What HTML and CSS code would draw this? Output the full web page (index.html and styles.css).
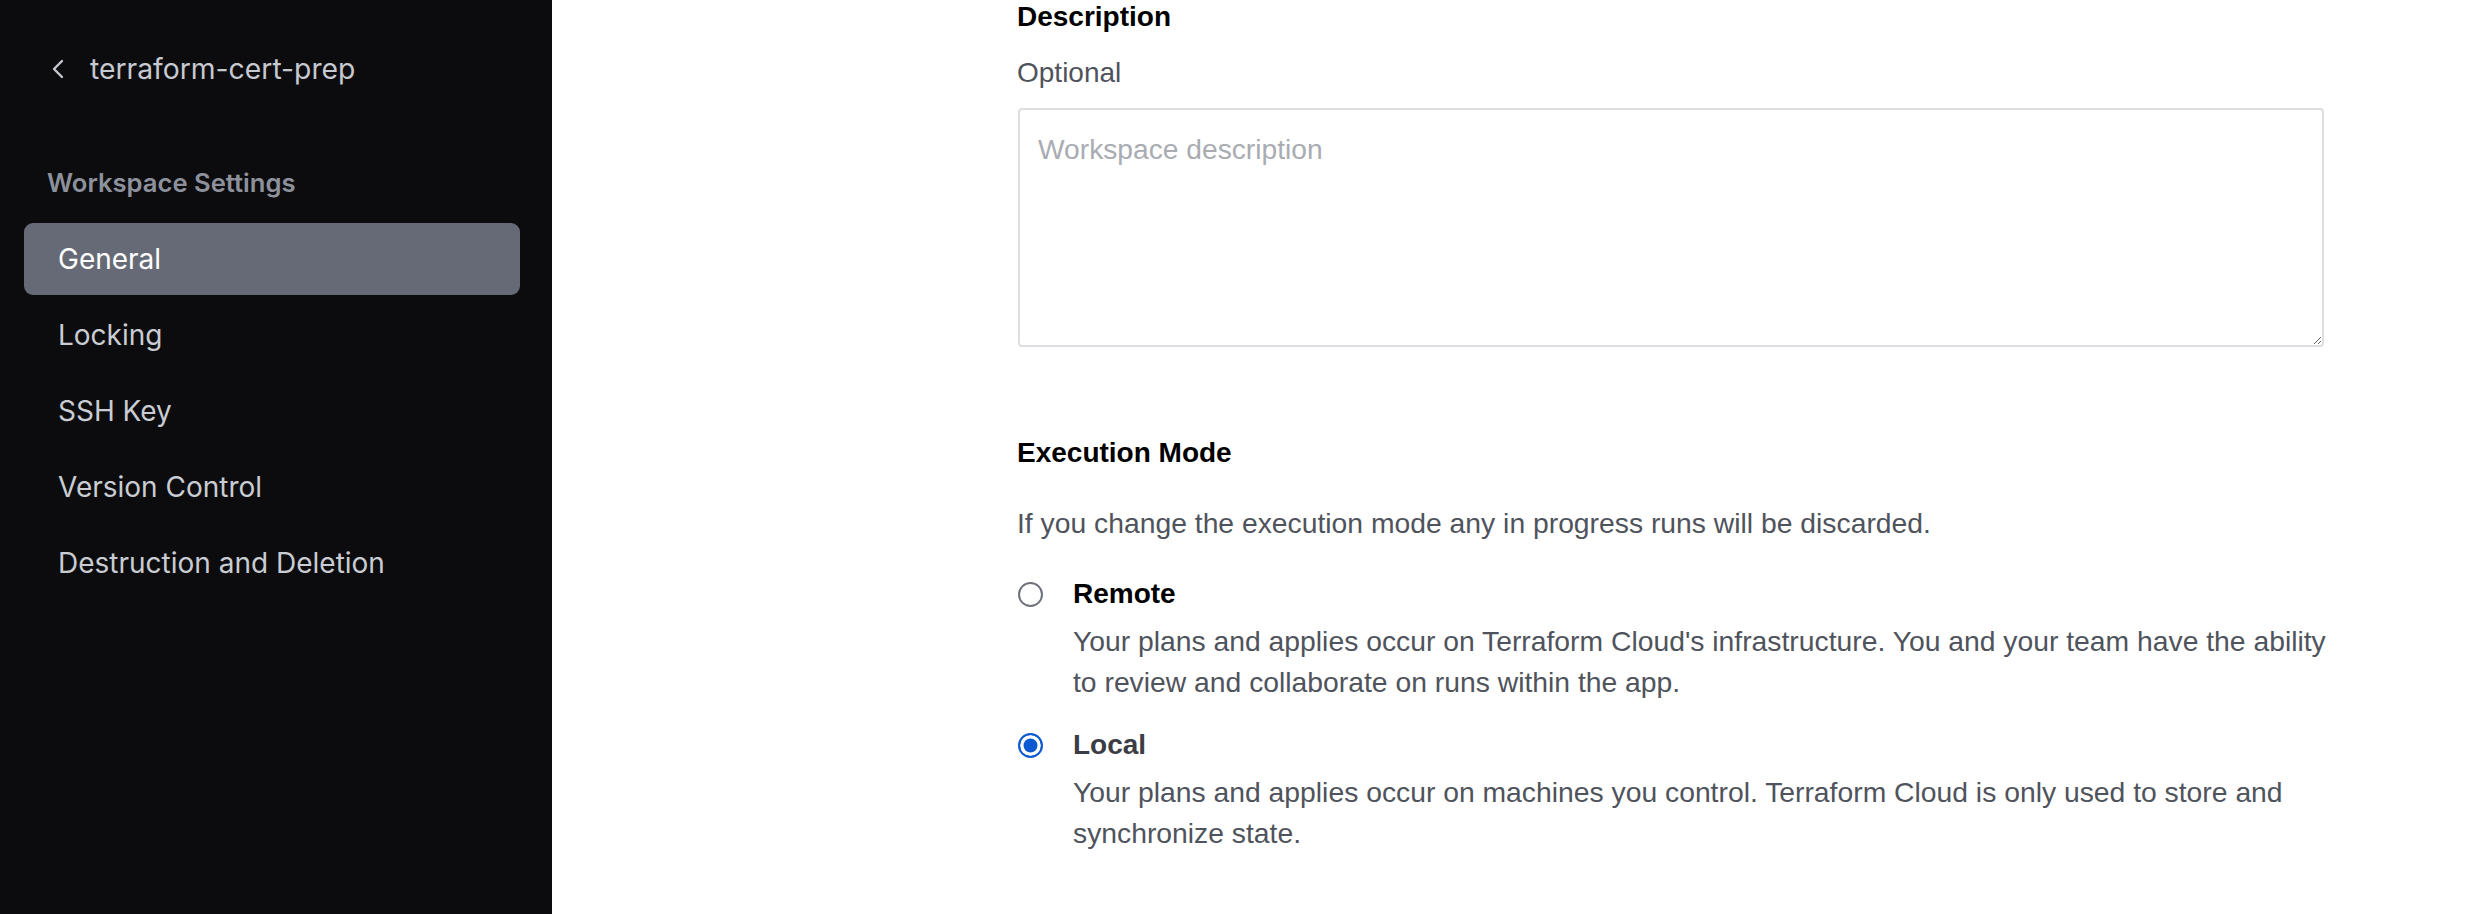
FILE: index.html
```html
<!DOCTYPE html>
<html>
<head>
<meta charset="utf-8">
<link rel="stylesheet" href="styles.css">
</head>
<body>
<div class="app">
  <aside class="sidebar">
    <div class="back">
      <svg class="chev" width="12" height="20" viewBox="0 0 12 20"><path d="M10 2 L2 10 L10 18" fill="none" stroke="#c6c9cf" stroke-width="2.4" stroke-linecap="round" stroke-linejoin="round"/></svg>
      <span class="ws-name">terraform-cert-prep</span>
    </div>
    <div class="section-title">Workspace Settings</div>
    <nav class="nav">
      <a class="nav-item active">General</a>
      <a class="nav-item">Locking</a>
      <a class="nav-item">SSH Key</a>
      <a class="nav-item">Version Control</a>
      <a class="nav-item">Destruction and Deletion</a>
    </nav>
  </aside>
  <main class="main">
    <div class="content">
      <div class="field-label">Description</div>
      <div class="hint">Optional</div>
      <textarea class="textarea" placeholder="Workspace description"></textarea>

      <div class="field-label exec">Execution Mode</div>
      <p class="help">If you change the execution mode any in progress runs will be discarded.</p>

      <div class="option">
        <span class="radio"></span>
        <div class="opt-body">
          <div class="opt-label remote">Remote</div>
          <div class="opt-desc">Your plans and applies occur on Terraform Cloud's infrastructure. You and your team have the ability to review and collaborate on runs within the app.</div>
        </div>
      </div>
      <div class="option">
        <span class="radio checked"></span>
        <div class="opt-body">
          <div class="opt-label local">Local</div>
          <div class="opt-desc">Your plans and applies occur on machines you control. Terraform Cloud is only used to store and synchronize state.</div>
        </div>
      </div>
    </div>
  </main>
</div>
</body>
</html>
```
FILE: styles.css
```css
html, body {
  margin: 0;
  padding: 0;
  height: 914px;
  overflow: hidden;
  background: #ffffff;
}
.app {
  display: flex;
  height: 914px;
}
.sidebar {
  width: 552px;
  flex: none;
  background: #0c0c0e;
  box-sizing: border-box;
  padding: 49px 32px 0 24px;
  font-family: Inter, "Noto Sans", sans-serif;
}
.back {
  display: flex;
  align-items: center;
  height: 40px;
  padding-left: 28px;
}
.chev {
  display: block;
  margin-right: 26px;
}
.ws-name {
  font-size: 28.3px;
  color: #c6c9cf;
  line-height: 40px;
}
.section-title {
  margin-top: 78px;
  padding-left: 23px;
  font-size: 25.6px;
  font-weight: 600;
  color: #8d919c;
  line-height: 32px;
}
.nav {
  margin-top: 24px;
  display: flex;
  flex-direction: column;
  gap: 4px;
}
.nav-item {
  display: flex;
  align-items: center;
  height: 72px;
  padding-left: 34px;
  border-radius: 9px;
  font-size: 28px;
  color: #c9ccd2;
}
.nav-item.active {
  background: #656a76;
  color: #ffffff;
}
.main {
  flex: 1;
  padding-left: 465px;
  font-family: "Liberation Sans", Arial, sans-serif;
}
.content {
  width: 1330px;
}
.field-label {
  font-size: 28px;
  font-weight: 700;
  color: #000000;
  line-height: 34px;
}
.hint {
  margin-top: 22px;
  font-size: 28px;
  color: #4f535c;
  line-height: 34px;
}
.textarea {
  display: block;
  box-sizing: border-box;
  width: 1306px;
  height: 239px;
  margin: 18px 0 0 1px;
  padding: 22px 18px 12px;
  border: 2px solid #dcdee2;
  border-radius: 4px;
  font-family: "Liberation Sans", Arial, sans-serif;
  font-size: 28.2px;
  line-height: 34px;
  resize: vertical;
  outline: none;
}
.textarea::placeholder {
  color: #a9acb2;
}
.exec {
  margin-top: 89px;
}
.help {
  margin: 36px 0 0;
  font-size: 28.3px;
  color: #4f535c;
  line-height: 34px;
}
.option {
  display: flex;
  margin-top: 37px;
}
.option + .option {
  margin-top: 25px;
}
.radio {
  flex: none;
  box-sizing: border-box;
  width: 25px;
  height: 25px;
  margin: 5px 30px 0 1px;
  border: 2px solid #6f727a;
  border-radius: 50%;
  background: #fff;
}
.radio.checked {
  border: 2.5px solid #0c59d1;
  background: #0c59d1;
  box-shadow: inset 0 0 0 3.5px #ffffff;
}
.opt-body {
  flex: 1;
}
.opt-label {
  font-size: 28px;
  font-weight: 700;
  line-height: 34px;
}
.opt-label.remote { color: #000000; }
.opt-label.local { color: #3b3d45; }
.opt-desc {
  margin-top: 10px;
  font-size: 28.3px;
  color: #4f535c;
  line-height: 41px;
}
```
